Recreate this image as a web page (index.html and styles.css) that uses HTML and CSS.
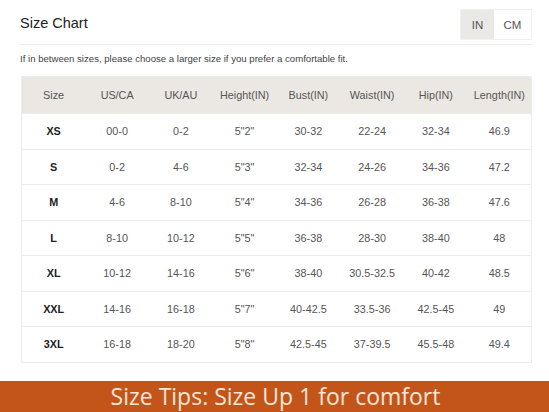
FILE: index.html
```html
<!DOCTYPE html>
<html>
<head>
<meta charset="utf-8">
<link rel="stylesheet" href="styles.css">
</head>
<body>
<div class="page">
  <div class="header">
    <div class="title">Size Chart</div>
    <div class="toggle">
      <span class="unit active">IN</span>
      <span class="unit">CM</span>
    </div>
  </div>
  <p class="note">If in between sizes, please choose a larger size if you prefer a comfortable fit.</p>
  <table class="chart">
    <thead>
      <tr><th>Size</th><th>US/CA</th><th>UK/AU</th><th>Height(IN)</th><th>Bust(IN)</th><th>Waist(IN)</th><th>Hip(IN)</th><th>Length(IN)</th></tr>
    </thead>
    <tbody>
      <tr><td class="size">XS</td><td>00-0</td><td>0-2</td><td>5"2"</td><td>30-32</td><td>22-24</td><td>32-34</td><td>46.9</td></tr>
      <tr><td class="size">S</td><td>0-2</td><td>4-6</td><td>5"3"</td><td>32-34</td><td>24-26</td><td>34-36</td><td>47.2</td></tr>
      <tr><td class="size">M</td><td>4-6</td><td>8-10</td><td>5"4"</td><td>34-36</td><td>26-28</td><td>36-38</td><td>47.6</td></tr>
      <tr><td class="size">L</td><td>8-10</td><td>10-12</td><td>5"5"</td><td>36-38</td><td>28-30</td><td>38-40</td><td>48</td></tr>
      <tr><td class="size">XL</td><td>10-12</td><td>14-16</td><td>5"6"</td><td>38-40</td><td>30.5-32.5</td><td>40-42</td><td>48.5</td></tr>
      <tr><td class="size">XXL</td><td>14-16</td><td>16-18</td><td>5"7"</td><td>40-42.5</td><td>33.5-36</td><td>42.5-45</td><td>49</td></tr>
      <tr><td class="size">3XL</td><td>16-18</td><td>18-20</td><td>5"8"</td><td>42.5-45</td><td>37-39.5</td><td>45.5-48</td><td>49.4</td></tr>
    </tbody>
  </table>
</div>
<div class="banner">Size Tips: Size Up 1 for comfort</div>
</body>
</html>
```
FILE: styles.css
```css
html, body {
  margin: 0;
  padding: 0;
  background: #ffffff;
}
body {
  width: 549px;
  height: 412px;
  overflow: hidden;
  font-family: "Liberation Sans", Arial, sans-serif;
  color: #444;
}
.page {
  padding: 0 17px 0 20px;
  height: 381px;
}
.header {
  display: flex;
  align-items: center;
  justify-content: space-between;
  height: 45px;
  border-bottom: 1px solid #efefef;
  box-sizing: border-box;
}
.title {
  font-size: 14.5px;
  color: #222;
  padding-top: 1px;
}
.toggle {
  display: flex;
  height: 31px;
  border: 1px solid #f0f0f0;
  box-sizing: border-box;
  margin-top: 5px;
}
.unit {
  display: flex;
  align-items: center;
  justify-content: center;
  font-size: 11.5px;
  color: #555;
  width: 37px;
}
.unit.active {
  width: 33px;
  background: #ebe9e6;
}
.note {
  margin: 8px 0 0;
  font-size: 9.6px;
  color: #444;
  line-height: 12px;
}
.chart {
  margin-top: 11px;
  margin-left: 1px;
  width: 511px;
  border-collapse: collapse;
  table-layout: fixed;
  border: 1px solid #ececec;
  font-size: 10.8px;
}
.chart th {
  background: #ebe8e3;
  color: #555;
  font-weight: normal;
  height: 36px;
  padding: 0;
  text-align: center;
}
.chart td {
  height: 34.5px;
  padding: 0;
  text-align: center;
  color: #555;
  border-top: 1px solid #ececec;
}
.chart td.size {
  color: #222;
  font-weight: bold;
}
.banner {
  height: 31px;
  background: #c3551b;
  color: #f7e6d6;
  font-family: "Open Sans", "Noto Sans", sans-serif;
  font-size: 23px;
  line-height: 31px;
  text-align: center;
  padding-left: 2px;
}
```
